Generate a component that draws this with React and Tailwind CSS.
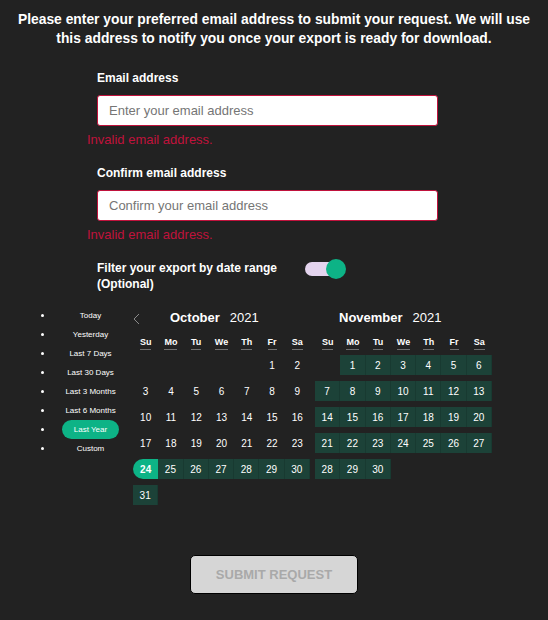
import { useState } from "react";

const PRESETS = [
  "Today",
  "Yesterday",
  "Last 7 Days",
  "Last 30 Days",
  "Last 3 Months",
  "Last 6 Months",
  "Last Year",
  "Custom",
];

const WEEKDAYS = ["Su", "Mo", "Tu", "We", "Th", "Fr", "Sa"];

// each month: offset of first day (0 = Sunday), number of days
const MONTHS = [
  { name: "October", year: 2021, offset: 5, days: 31, pad: "pl-[37px]" },
  { name: "November", year: 2021, offset: 1, days: 30, pad: "pl-[24px]" },
];

const inRange = (month, day) =>
  (month === "October" && day >= 24) || month === "November";

const Month = ({ month, showPrev }) => {
  const cells = [];
  for (let i = 0; i < month.offset; i++) cells.push(null);
  for (let d = 1; d <= month.days; d++) cells.push(d);

  return (
    <div className="relative w-[177px]">
      {showPrev && (
        <button type="button" className="absolute left-0 top-[7px] text-[#8a8a8a]">
          <svg width="7" height="12" viewBox="0 0 7 12" fill="none">
            <path d="M6 1L1 6l5 5" stroke="currentColor" strokeWidth="1" />
          </svg>
        </button>
      )}
      <div className={`h-[24px] flex items-center gap-[10px] text-[13px] text-white ${month.pad}`}>
        <span className="font-bold">{month.name}</span>
        <span>{month.year}</span>
      </div>
      <div className="mt-[4px] h-[18px] grid grid-cols-7 items-center text-center text-[9px] font-bold text-white">
        {WEEKDAYS.map((w) => (
          <span key={w}>
            <abbr className="no-underline border-b border-[#6f6f6f] pb-[2px]">{w}</abbr>
          </span>
        ))}
      </div>
      <div className="mt-[3px] grid grid-cols-7 gap-y-[6px]">
        {cells.map((d, i) => {
          if (d === null) return <div key={i} className="h-[20px]" />;
          const selected = month.name === "October" && d === 24;
          const range = inRange(month.name, d);
          return (
            <div
              key={i}
              className={`h-[20px] flex items-center justify-center text-[10px] text-white ${
                selected
                  ? "bg-[#0db386] rounded-l-full font-bold"
                  : range
                  ? "bg-[#1c4238] border-r border-[#183a31]"
                  : ""
              }`}
            >
              {d}
            </div>
          );
        })}
      </div>
    </div>
  );
};

const EmailField = ({ label, placeholder, first }) => (
  <>
    <label
      className={`ml-[10px] text-[12px] leading-[16px] font-bold text-white ${
        first ? "" : "mt-[17px]"
      }`}
    >
      {label}
    </label>
    <div className="ml-[10px] mt-[9px] w-[341px] h-[31px] bg-white border border-[#c0123c] rounded-[3px] flex">
      <input
        type="text"
        placeholder={placeholder}
        className="flex-1 px-[11px] bg-transparent text-[13px] text-[#333] placeholder:text-[#757575] outline-none"
      />
    </div>
    <span className="mt-[6px] text-[13px] leading-[16px] text-[#c0123c]">
      Invalid email address.
    </span>
  </>
);

export default function App() {
  const [enabled, setEnabled] = useState(true);
  const [preset, setPreset] = useState("Last Year");

  return (
    <div
      className="min-h-[620px] w-full bg-[#222222] flex flex-col"
      style={{ fontFamily: '"Liberation Sans", Arial, sans-serif' }}
    >
      <p className="pt-[10px] px-[16px] text-center text-[13.85px] leading-[19px] font-bold text-white">
        Please enter your preferred email address to submit your request. We will use this
        address to notify you once your export is ready for download.
      </p>

      <div className="ml-[87px] mt-[22px] flex flex-col">
        <EmailField label="Email address" placeholder="Enter your email address" first />
        <EmailField label="Confirm email address" placeholder="Confirm your email address" />

        <div className="ml-[10px] mt-[17px] flex items-start">
          <span className="w-[208px] text-[12px] leading-[16px] font-bold text-white">
            Filter your export by date range (Optional)
          </span>
          <button
            type="button"
            onClick={() => setEnabled(!enabled)}
            className="relative mt-[2px] w-[40px] h-[14px] rounded-full bg-[#e4d4ee]"
          >
            <span
              className={`absolute top-[-3px] w-[20px] h-[20px] rounded-full bg-[#0db386] ${
                enabled ? "left-[21px]" : "left-0"
              }`}
            />
          </button>
        </div>
      </div>

      <div className="mt-[14px] pl-[41px] flex">
        <ul className="w-[92px] flex flex-col">
          {PRESETS.map((p) => (
            <li key={p} className="h-[19px] flex items-center">
              <span className="w-[3px] h-[3px] rounded-full bg-white" />
              <button
                type="button"
                onClick={() => setPreset(p)}
                className={`ml-[18px] w-[57px] h-[19px] rounded-full text-[8px] text-white text-center ${
                  preset === p ? "bg-[#0db386]" : ""
                }`}
              >
                {p}
              </button>
            </li>
          ))}
        </ul>
        <div className="flex gap-[5px]">
          <Month month={MONTHS[0]} showPrev />
          <Month month={MONTHS[1]} />
        </div>
      </div>

      <div className="mt-[50px] flex justify-center">
        <button
          type="button"
          disabled
          className="w-[168px] h-[39px] bg-[#d6d6d6] border border-black rounded-[5px] text-[13px] font-bold uppercase text-[#a9a9a9]"
        >
          Submit Request
        </button>
      </div>
    </div>
  );
}
